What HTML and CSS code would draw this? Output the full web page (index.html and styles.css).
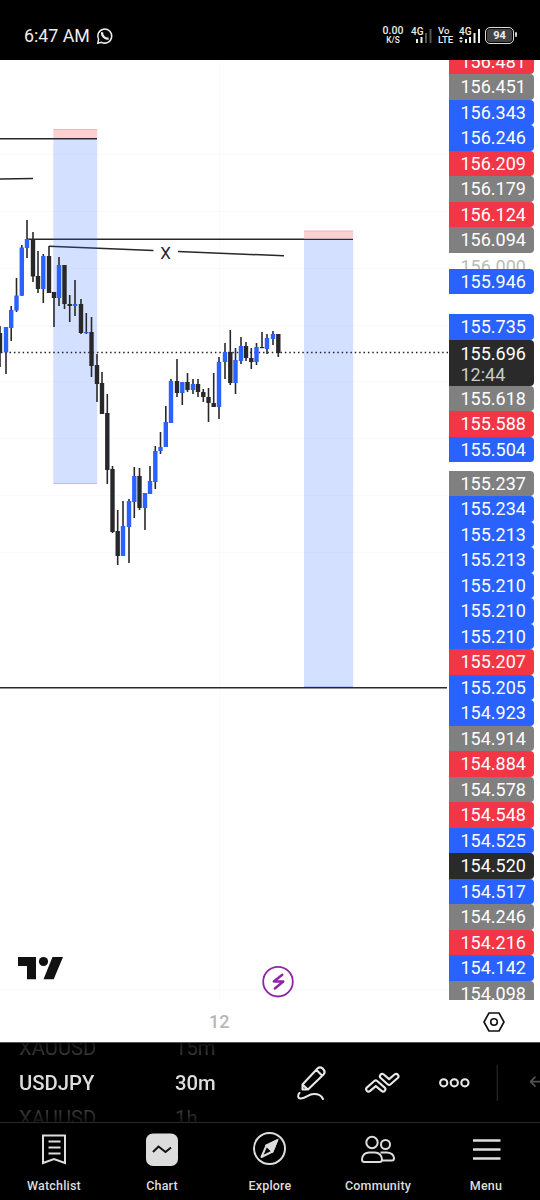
FILE: index.html
```html
<!DOCTYPE html>
<html lang="en">
<head>
<meta charset="utf-8">
<title>USDJPY chart</title>
<link rel="stylesheet" href="styles.css">
</head>
<body>
<div class="screen">
  <header class="status">
    <span class="clock">6:47 AM</span>
    <svg class="whatsapp" width="18" height="18" viewBox="0 0 18 18" fill="none" stroke="#eee" stroke-width="1.5"><path d="M1.8 16.2 2.6 12.5A7 7 0 1 1 5.5 15.3Z"/><path d="M6.2 5.2C5.4 8.7 9.3 12.4 12.6 11.4" stroke-width="2.3"/></svg>
    <div class="speed"><b>0.00</b><small>K/S</small></div>
    <svg class="signal" width="21" height="18" viewBox="0 0 21 18"><text class="net" x="0" y="9">4G</text><g fill="#eee"><path d="M5 13h2v4H5zM9.500 11h2v6h-2z"/><path fill="#555" d="M14 7h2v10h-2zM18.500 3h2v14h-2z"/></g></svg>
    <div class="volte"><span>Vo</span><span>LTE</span></div>
    <svg class="signal2" width="22" height="18" viewBox="0 0 22 18"><text class="net" x="0" y="9">4G</text><path fill="#eee" d="M0 13 2 10.500 4 13zM0 14.500h4L2 17zM6 13h2v4H6zM10 11h2v6h-2zM14.500 7h2v10h-2zM19 3h2v14h-2z"/></svg>
    <div class="battery">94</div>
  </header>

  <main class="chart">
    <svg class="plot" width="448" height="940" viewBox="0 60 448 940">
      <g fill="none" stroke="#fafafa"><path d="M219.500 60V1000M0 154.500H448M0 211.500H448M0 268.500H448M0 325.500H448M0 381.500H448M0 438.500H448M0 495.500H448M0 552.500H448M0 989.500H448"/></g>
      <path stroke="#28282b" stroke-width="1.500" d="M0 138.700H97M0 179 33 178.500M27 239.200H353M0 687.700H447"/>
      <path stroke="#28282b" stroke-width="1.500" d="M49 246.200 153.500 250.500M178 251.500 284 255.800"/>
      <text class="mark" x="165.700" y="258.500" text-anchor="middle">X</text>
      <g fill="#2962ff" fill-opacity=".2"><path d="M53.300 139H97.200V484H53.300zM304 239.500H353.200V687H304z"/></g>
      <path fill="#fbd0d3" d="M53.300 129H97.200V138H53.300zM304 230.500H353.200V238.500H304z"/>
      <path stroke="#2962ff" stroke-opacity=".25" d="M53.300 483.500H97.200M304 686.500H353"/>
      <path stroke="#f23645" stroke-opacity=".2" d="M53.300 129.500H97.200M304 231H353"/>
      <path stroke="#222" stroke-width="1.500" stroke-dasharray="1.500 2.870" d="M.8 352.500H448"/>
      <g id="candles"></g>
      <g class="tv" fill="#111"><path d="M18 957H36V979.300H27V966H18zM52.500 957H63L53.700 979.300H43.500z"/><circle cx="43.500" cy="961.500" r="4.600"/></g>
      <circle cx="278" cy="981.700" r="14.800" fill="#fff" stroke="#8e24aa" stroke-width="1.800"/>
      <path d="M282.300 974.800 273.800 981.500H283.300L274.800 988.500" fill="none" stroke="#8e24aa" stroke-width="2.400" stroke-linecap="round" stroke-linejoin="round"/>
    </svg>
    <div class="prices">
      <div class="tag red">156.481</div><div class="tag gray">156.451</div><div class="tag">156.343</div><div class="tag">156.246</div><div class="tag red">156.209</div><div class="tag gray">156.179</div><div class="tag red">156.124</div><div class="tag gray">156.094</div>
      <div class="tick">156.000</div>
      <div class="tag spaced">155.946</div>
      <div class="tag">155.735</div>
      <div class="tag current"><span>155.696</span><span class="countdown">12:44</span></div>
      <div class="tag gray">155.618</div><div class="tag red">155.588</div><div class="tag short-gap">155.504</div>
      <div class="tag gray">155.237</div><div class="tag">155.234</div><div class="tag">155.213</div><div class="tag">155.213</div><div class="tag">155.210</div><div class="tag">155.210</div><div class="tag">155.210</div><div class="tag red">155.207</div><div class="tag">155.205</div><div class="tag">154.923</div><div class="tag gray">154.914</div><div class="tag red">154.884</div><div class="tag gray">154.578</div><div class="tag red">154.548</div><div class="tag">154.525</div><div class="tag dark">154.520</div><div class="tag">154.517</div><div class="tag gray">154.246</div><div class="tag red">154.216</div><div class="tag">154.142</div><div class="tag gray">154.098</div>
    </div>
  </main>

  <div class="timeline">
    <span class="date">12</span>
    <svg width="22" height="20" viewBox="0 0 22 20" fill="none" stroke="#111" stroke-width="1.600"><path d="M6 1H16L21 10 16 19H6L1 10z" stroke-linejoin="round"/><circle cx="11" cy="10" r="3.300"/></svg>
  </div>

  <section class="toolbar">
    <div class="wheel symbol"><span>XAUUSD</span><b>USDJPY</b><span>XAUUSD</span></div>
    <div class="wheel interval"><span>15m</span><b>30m</b><span>1h</span></div>
    <svg class="tools" width="270" height="79" viewBox="270 1043 270 79" fill="none" stroke="#e8e8e8" stroke-width="2.100" stroke-linejoin="round" stroke-linecap="round">
      <path d="M302.500 1084.500 317.500 1068.500Q320 1066.200 322.700 1068.500L323.500 1069.500Q325.800 1072 323.500 1074.500L308 1089.500H302.500zM303 1085 307.500 1089.300M316.500 1070 322 1075.500"/>
      <path d="M299.500 1093C297 1095 298 1099 301 1098.500C307 1098 308 1094 314 1094Q321 1094 323 1099"/>
      <path d="M366.800 1087.600 374.300 1081Q375.800 1079.700 377.200 1081L384.700 1087.600Q386.200 1089 384.900 1090.700Q383.200 1092.400 381.500 1090.900L375.800 1086.100 370.200 1090.900Q368.300 1092.400 366.700 1090.700Q365.400 1089 366.800 1087.600z"/>
      <path d="M380.700 1078 387.600 1084.300Q389.100 1085.700 390.600 1084.300L397.700 1078Q399.300 1076.500 398 1074.800Q396.300 1073.100 394.500 1074.500L389.100 1079.100 383.800 1074.500Q382 1073.100 380.400 1074.800Q379.100 1076.500 380.700 1078z"/>
      <circle cx="443.700" cy="1082.800" r="3.600"/><circle cx="454.300" cy="1082.800" r="3.600"/><circle cx="464.900" cy="1082.800" r="3.600"/>
      <path stroke="#242424" stroke-width="1.300" stroke-linecap="butt" d="M497.300 1065V1101"/>
      <path stroke="#505050" stroke-width="1.700" d="M541 1081.700H531M535 1077.200 530.500 1081.700 535 1086.200"/>
    </svg>
  </section>

  <nav class="nav">
    <a><svg width="34" height="34" viewBox="0 0 34 34" fill="none" stroke="#ddd" stroke-width="2"><path d="M6 2.500H28V30L17 26 6 30zM11.500 8.500H23.500M11.500 14.500H23.500M11.500 20.500H23.500"/></svg><span>Watchlist</span></a>
    <a><svg width="34" height="34" viewBox="0 0 34 34"><rect x="1" y=".5" width="32" height="32.500" rx="7" fill="#ddd"/><path d="M8 19 13.500 13.500 20.500 19 26 14.500" fill="none" stroke="#111" stroke-width="2"/></svg><span>Chart</span></a>
    <a><svg class="compass" width="34" height="34" viewBox="0 0 34 34" fill="none" stroke="#ddd" stroke-width="2"><circle cx="16.500" cy="15.500" r="15.500"/><path d="M24 7.500 13.500 12.500 8.500 24 19.500 18.500zM13.500 12.500 19.500 18.500" stroke-linejoin="round"/><path d="M24 7.500 13.500 12.500 19.500 18.500z" fill="#ddd"/></svg><span>Explore</span></a>
    <a><svg class="people" width="36" height="34" viewBox="0 0 36 34" fill="none" stroke="#ddd" stroke-width="2"><circle cx="12" cy="9.500" r="5.700"/><circle cx="25.500" cy="11.500" r="4.500"/><path d="M2 26.500C2 22 5.500 19.500 9 19.500H15C19 19.500 22 22.500 22 26.500Q22 29 19.500 29H4.500Q2 29 2 26.500zM20.500 19.500H26.500C31 19.500 34 22 34 25Q34 27.500 32 27.500H22" stroke-linejoin="round"/></svg><span>Community</span></a>
    <a><svg width="34" height="34" viewBox="0 0 34 34" fill="none" stroke="#ddd" stroke-width="2.500"><path d="M4 7.500H31.500M4 16.500H31.500M4 25.500H31.500"/></svg><span>Menu</span></a>
  </nav>
</div>
<script src="chart.js"></script>
</body>
</html>
```

FILE: styles.css
```css
* { box-sizing: border-box; }
body { margin: 0; background: #000; font-family: Roboto, "Noto Sans", sans-serif; }
.screen { width: 540px; height: 1200px; display: flex; flex-direction: column; overflow: hidden; }
.status { height: 60px; display: flex; align-items: flex-start; padding: 26px 0 0 24px; color: #eee; }
.clock { width: 66px; font-size: 17.8px; line-height: 20px; white-space: nowrap; }
.whatsapp { margin: 1px 0 0 6px; overflow: visible; }
.speed { width: 24px; margin-left: 267px; display: flex; flex-direction: column; align-items: center; }
.speed b { font-size: 10.5px; font-weight: 500; line-height: 9px; }
.speed small { font-size: 8.3px; font-weight: 500; line-height: 9px; padding-top: 1px; }
.signal { margin-left: 6px; }
.volte { width: 16px; margin-left: 6px; font-size: 9.6px; font-weight: 500; line-height: 9px; display: flex; flex-direction: column; }
.signal2 { margin-left: 5px; }
.net { font: 500 10px Roboto, sans-serif; fill: #eee; }
.battery { position: relative; width: 29px; height: 17px; margin: 1px 0 0 4px; border: 1.5px solid #ddd; border-radius: 5px; background: #444; box-shadow: inset 0 0 0 1px #000; font-size: 11px; font-weight: 700; line-height: 15px; text-align: center; }
.battery::after { content: ""; position: absolute; right: -4px; top: 4px; width: 2px; height: 5px; border-radius: 1px; background: #ccc; }

.chart { height: 940px; display: flex; background: #fff; overflow: hidden; }
.plot { flex: none; }
.mark { font: 17px Roboto, sans-serif; fill: #28282b; }
.wick { stroke: #28282b; stroke-width: 1.6; }
.up { fill: #2962ff; }
.down { fill: #28282b; }

.prices { width: 86px; height: 940px; padding-left: .5px; overflow: hidden; font-size: 18px; line-height: 25.5px; color: #fff; }
.tag { height: 25.5px; padding-left: 12px; background: #2962ff; border-radius: 0 4px 4px 0; }
.tag:first-child { margin-top: -11.2px; }
.red { background: #f23645; }
.gray { background: #808080; }
.dark { background: #2a2a2a; }
.tick { height: 16px; padding: 1px 0 0 12px; overflow: hidden; color: #bbb; }
.spaced { margin-bottom: 20px; }
.short-gap { margin-bottom: 8.3px; }
.current { height: 46px; padding-top: 2.8px; display: flex; flex-direction: column; background: #2a2a2a; line-height: 21px; }
.countdown { color: #ccc; }

.timeline { height: 43px; display: flex; align-items: center; padding: 1px 0 0 209px; background: #fff; border-bottom: 1px solid #555; }
.date { width: 274px; color: #b7b7b7; font-size: 18px; font-weight: 500; }

.toolbar { height: 80px; display: flex; padding-left: 19px; background: #000; border-bottom: 1px solid #292929; overflow: hidden; }
.wheel { height: 79px; padding-top: 1px; display: flex; flex-direction: column; justify-content: center; overflow: hidden; font-size: 20.3px; line-height: 35px; color: #606060; -webkit-mask-image: linear-gradient(transparent -6px, #000 24px, #000 56px, transparent 85px); }
.wheel span { flex: none; }
.wheel b { flex: none; font-weight: 500; color: #ddd; }
.symbol { width: 156px; }
.interval { width: 95px; }
.tools { flex: none; }

.nav { height: 77px; display: grid; grid-template-columns: repeat(5, 108px); padding-top: 10px; }
.nav a { display: flex; flex-direction: column; align-items: center; color: #ddd; font-size: 12.5px; font-weight: 500; line-height: 16px; letter-spacing: .2px; }
.nav svg { overflow: visible; }
.nav span { margin-top: 11px; }
```

FILE: chart.js
```js
// Each candle: centre x, body top, body bottom, wick top, wick bottom, rising
const candles = [
  [0,333,353,326,367,0],[6,327,352.5,327,374,1],[11.2,310,328,306,341,1],[16.5,295.5,310.5,278,312,1],
  [21.8,247.5,295.7,245,296,1],[27,239,248,220,258,1],[33,239,276.5,232,282,0],[38,276,289,251,293,0],
  [43.3,256,289,254,303,1],[49,256,293,246,293,0],[54,292,298,292,327,0],[59,265,298,257,306,1],
  [64.5,265,304,265,309,0],[69.7,304,306,295,322,0],[75,304,306,280,316,1],[81,304,333,299,334,0],
  [86.3,332,333.2,313,334,1],[91.5,332,366,317,377,0],[97,365,384,354,402,0],[102,383,414,372,414,0],
  [107.3,413,470,394,484,0],[112.5,469,532,466,533,0],[117.7,531,556,510,565,0],[123,526,556,501,556,1],
  [129,501,527,499,563,1],[134.3,476,502,467,518,1],[139.5,476,508,468,510,0],[145,493,508,493,530,1],
  [150,481,494,466,494,1],[155.3,451,482,446,489,1],[160.5,447,451,432,454,1],[165.8,422,447,406,447,1],
  [171,381,423,379,423,1],[177,381,393,359,397,0],[182.3,382,393,382,405,1],[187.5,382,390,373,392,0],
  [193,384,390,379,394,1],[198,384,392,379,397,0],[203.3,392,397,389,402,0],[208.5,397,403,388,422,0],
  [213.7,403,407,373,407,0],[219,362,407,357,419,1],[225,352,362,343,379,1],[230.3,352,383,330,385,0],
  [235.5,360,383,348,394,1],[241,346,361,337,364,1],[246,346,358,342,361,0],[251.3,358,362,348,369,0],
  [256.5,347,362,343,365,1],[262,347,348.2,332,348,0],[267,338,349,334,354,1],[273,334,339,331,345,1],
  [278.3,334,353,334,357,0]
];
document.getElementById("candles").innerHTML = candles.map(([x, top, bottom, high, low, up]) =>
  `<path class="wick" d="M${x} ${high}V${low}"/><rect class="${up ? "up" : "down"}" x="${x - 2.2}" y="${top}" width="4.4" height="${bottom - top}"/>`
).join("");
```
